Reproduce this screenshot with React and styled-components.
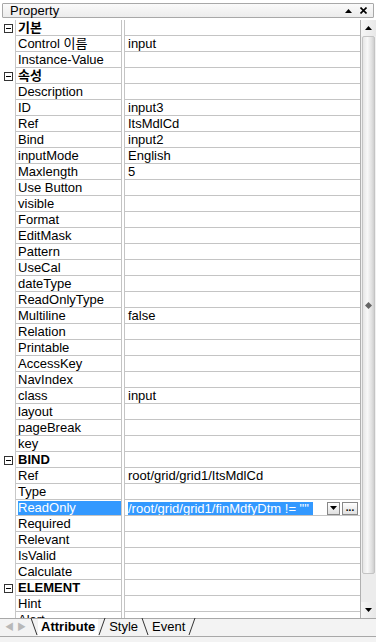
import React from 'react'
import styled, { createGlobalStyle } from 'styled-components'

const Global = createGlobalStyle`
  html, body { margin: 0; padding: 0; background: #fff; }
  body { font-family: "Liberation Sans", "Noto Sans CJK KR", sans-serif; font-size: 13px; }
`

const rows = [
  { cat: '기본' },
  { name: 'Control 이름', value: 'input' },
  { name: 'Instance-Value' },
  { cat: '속성' },
  { name: 'Description' },
  { name: 'ID', value: 'input3' },
  { name: 'Ref', value: 'ItsMdlCd' },
  { name: 'Bind', value: 'input2' },
  { name: 'inputMode', value: 'English' },
  { name: 'Maxlength', value: '5' },
  { name: 'Use Button' },
  { name: 'visible' },
  { name: 'Format' },
  { name: 'EditMask' },
  { name: 'Pattern' },
  { name: 'UseCal' },
  { name: 'dateType' },
  { name: 'ReadOnlyType' },
  { name: 'Multiline', value: 'false' },
  { name: 'Relation' },
  { name: 'Printable' },
  { name: 'AccessKey' },
  { name: 'NavIndex' },
  { name: 'class', value: 'input' },
  { name: 'layout' },
  { name: 'pageBreak' },
  { name: 'key' },
  { cat: 'BIND' },
  { name: 'Ref', value: 'root/grid/grid1/ItsMdlCd' },
  { name: 'Type' },
  { name: 'ReadOnly', value: '/root/grid/grid1/finMdfyDtm != ""', selected: true },
  { name: 'Required' },
  { name: 'Relevant' },
  { name: 'IsValid' },
  { name: 'Calculate' },
  { cat: 'ELEMENT' },
  { name: 'Hint' },
  { name: 'Alert' },
]

const Panel = styled.div`
  width: 376px;
  height: 642px;
  display: flex;
  flex-direction: column;
  background: #f3f3f3;
  overflow: hidden;
`

const TitleWrap = styled.div`
  height: 20px;
  padding: 3px 2px 2px 2px;
  box-sizing: border-box;
  background: #fff;
`

const Title = styled.div`
  height: 15px;
  box-sizing: border-box;
  border: 1px solid #a8a8a8;
  border-radius: 1px;
  background: linear-gradient(#fafafa, #ececec);
  display: flex;
  align-items: center;
  padding: 0 6px 0 7px;
  color: #000;
`

const TitleText = styled.span`
  flex: 1;
  line-height: 13px;
  font-size: 13px;
`

const TitleBtns = styled.span`
  display: flex;
  align-items: center;
  gap: 8px;
`

const Body = styled.div`
  display: flex;
  height: 598px;
`

const Grid = styled.div`
  flex: 1;
  overflow: hidden;
  background: #fff;
`

const Row = styled.div`
  display: grid;
  grid-template-columns: 16px 105px 4px 1fr;
  height: 16px;
`

const Gutter = styled.div`
  border-right: 1px solid #c8c8c8;
  display: flex;
  align-items: center;
  justify-content: center;
  padding-left: 2px;
`

const Name = styled.div`
  height: 16px;
  box-sizing: border-box;
  border-bottom: 1px solid #c4c4c4;
  padding: 1px 0 0 2px;
  line-height: 14px;
  white-space: nowrap;
  overflow: hidden;
  font-weight: ${p => (p.$cat ? 'bold' : 'normal')};
  font-size: 13px;
  background: ${p => (p.$sel ? '#3399ff' : 'transparent')};
  background-clip: content-box;
  color: ${p => (p.$sel ? '#fff' : '#000')};
`

const Divider = styled.div`
  border-left: 1px solid #c4c4c4;
  border-right: 1px solid #c4c4c4;
`

const Value = styled.div`
  height: 16px;
  box-sizing: border-box;
  border-bottom: 1px solid #c4c4c4;
  padding: 1px 0 0 3px;
  line-height: 14px;
  white-space: nowrap;
  overflow: hidden;
  display: flex;
  align-items: center;
`

const SelText = styled.span`
  background: #3399ff;
  color: #fff;
  flex: 1;
  line-height: 13px;
  margin-right: 14px;
`

const SmallBtn = styled.span`
  width: ${p => p.$w}px;
  height: 13px;
  box-sizing: border-box;
  border: 1px solid #888;
  background: linear-gradient(#fff, #e0e0e0);
  margin-right: 2px;
  display: flex;
  align-items: center;
  justify-content: center;
  font-size: 10px;
  line-height: 10px;
  font-weight: bold;
`

const Scroll = styled.div`
  width: 16px;
  display: flex;
  flex-direction: column;
  background: #f0f0f0;
  border-left: 1px solid #b0b0b0;
  box-sizing: border-box;
`

const Arrow = styled.div`
  height: 16px;
  display: flex;
  align-items: center;
  justify-content: center;
  background: linear-gradient(to right, #f6f6f6, #e8e8e8);
`

const Thumb = styled.div`
  height: 536px;
  margin: 0 1px;
  border: 1px solid #c4c4c4;
  border-radius: 2px;
  background: linear-gradient(to right, #e6e6e6, #f8f8f8 40%, #e0e0e0 80%, #cfcfcf);
  display: flex;
  align-items: center;
  justify-content: center;
`

const Track = styled.div`
  flex: 1;
  background: #ececec;
`

const TabBar = styled.div`
  height: 19px;
  display: flex;
  align-items: flex-end;
  background: #f3f3f3;
  border-top: 1px solid #a8a8a8;
  border-bottom: 1px solid #a8a8a8;
  box-sizing: border-box;
  margin-bottom: 5px;
`

const NavBtns = styled.div`
  display: flex;
  gap: 3px;
  padding: 0 4px 4px 5px;
  color: #b8b8b8;
  font-size: 9px;
  line-height: 10px;
`

const Tab = styled.span`
  font-weight: ${p => (p.$active ? 'bold' : 'normal')};
  font-size: 13px;
  padding: 0 3px 2px;
  line-height: 15px;
  background: ${p => (p.$active ? '#fff' : 'transparent')};
`

const Slant = ({ dir }) => (
  <svg width="8" height="18" viewBox="0 0 8 18">
    {dir === 'l' ? <path d="M1 0 L7 17" stroke="#333" /> : <path d="M7 0 L1 17" stroke="#333" />}
  </svg>
)

const Minus = () => (
  <svg width="9" height="9" viewBox="0 0 9 9">
    <rect x="0.5" y="0.5" width="8" height="8" fill="#fff" stroke="#333" />
    <path d="M2 4.5 H7" stroke="#000" />
  </svg>
)

const Tri = ({ down }) => (
  <svg width="7" height="4" viewBox="0 0 7 4">
    <path d={down ? 'M0 0 H7 L3.5 4 Z' : 'M0 4 H7 L3.5 0 Z'} fill="#000" />
  </svg>
)

export default function App() {
  return (
    <>
      <Global />
      <Panel>
        <TitleWrap>
          <Title>
            <TitleText>Property</TitleText>
            <TitleBtns>
              <Tri />
              <svg width="7" height="7" viewBox="0 0 7 7">
                <path d="M0.5 0.5 L6.5 6.5 M6.5 0.5 L0.5 6.5" stroke="#000" strokeWidth="1.6" />
              </svg>
            </TitleBtns>
          </Title>
        </TitleWrap>
        <Body>
          <Grid>
            {rows.map((r, i) => (
              <Row key={i}>
                <Gutter>{r.cat && <Minus />}</Gutter>
                <Name $cat={!!r.cat} $sel={r.selected}>{r.cat || r.name}</Name>
                <Divider />
                <Value>
                  {r.selected ? (
                    <>
                      <SelText>{r.value}</SelText>
                      <SmallBtn $w={13}><Tri down /></SmallBtn>
                      <SmallBtn $w={16}>...</SmallBtn>
                    </>
                  ) : (
                    r.value
                  )}
                </Value>
              </Row>
            ))}
          </Grid>
          <Scroll>
            <Arrow><Tri /></Arrow>
            <Thumb>
              <svg width="7" height="7" viewBox="0 0 7 7">
                <path d="M3.5 0 L7 3.5 L3.5 7 L0 3.5 Z" fill="#666" />
              </svg>
            </Thumb>
            <Track />
            <Arrow><Tri down /></Arrow>
          </Scroll>
        </Body>
        <TabBar>
          <NavBtns>
            <span>◀</span>
            <span>▶</span>
          </NavBtns>
          <Slant dir="l" />
          <Tab $active>Attribute</Tab>
          <Slant dir="r" />
          <Tab>Style</Tab>
          <Slant dir="l" />
          <Tab>Event</Tab>
          <Slant dir="r" />
        </TabBar>
      </Panel>
    </>
  )
}
